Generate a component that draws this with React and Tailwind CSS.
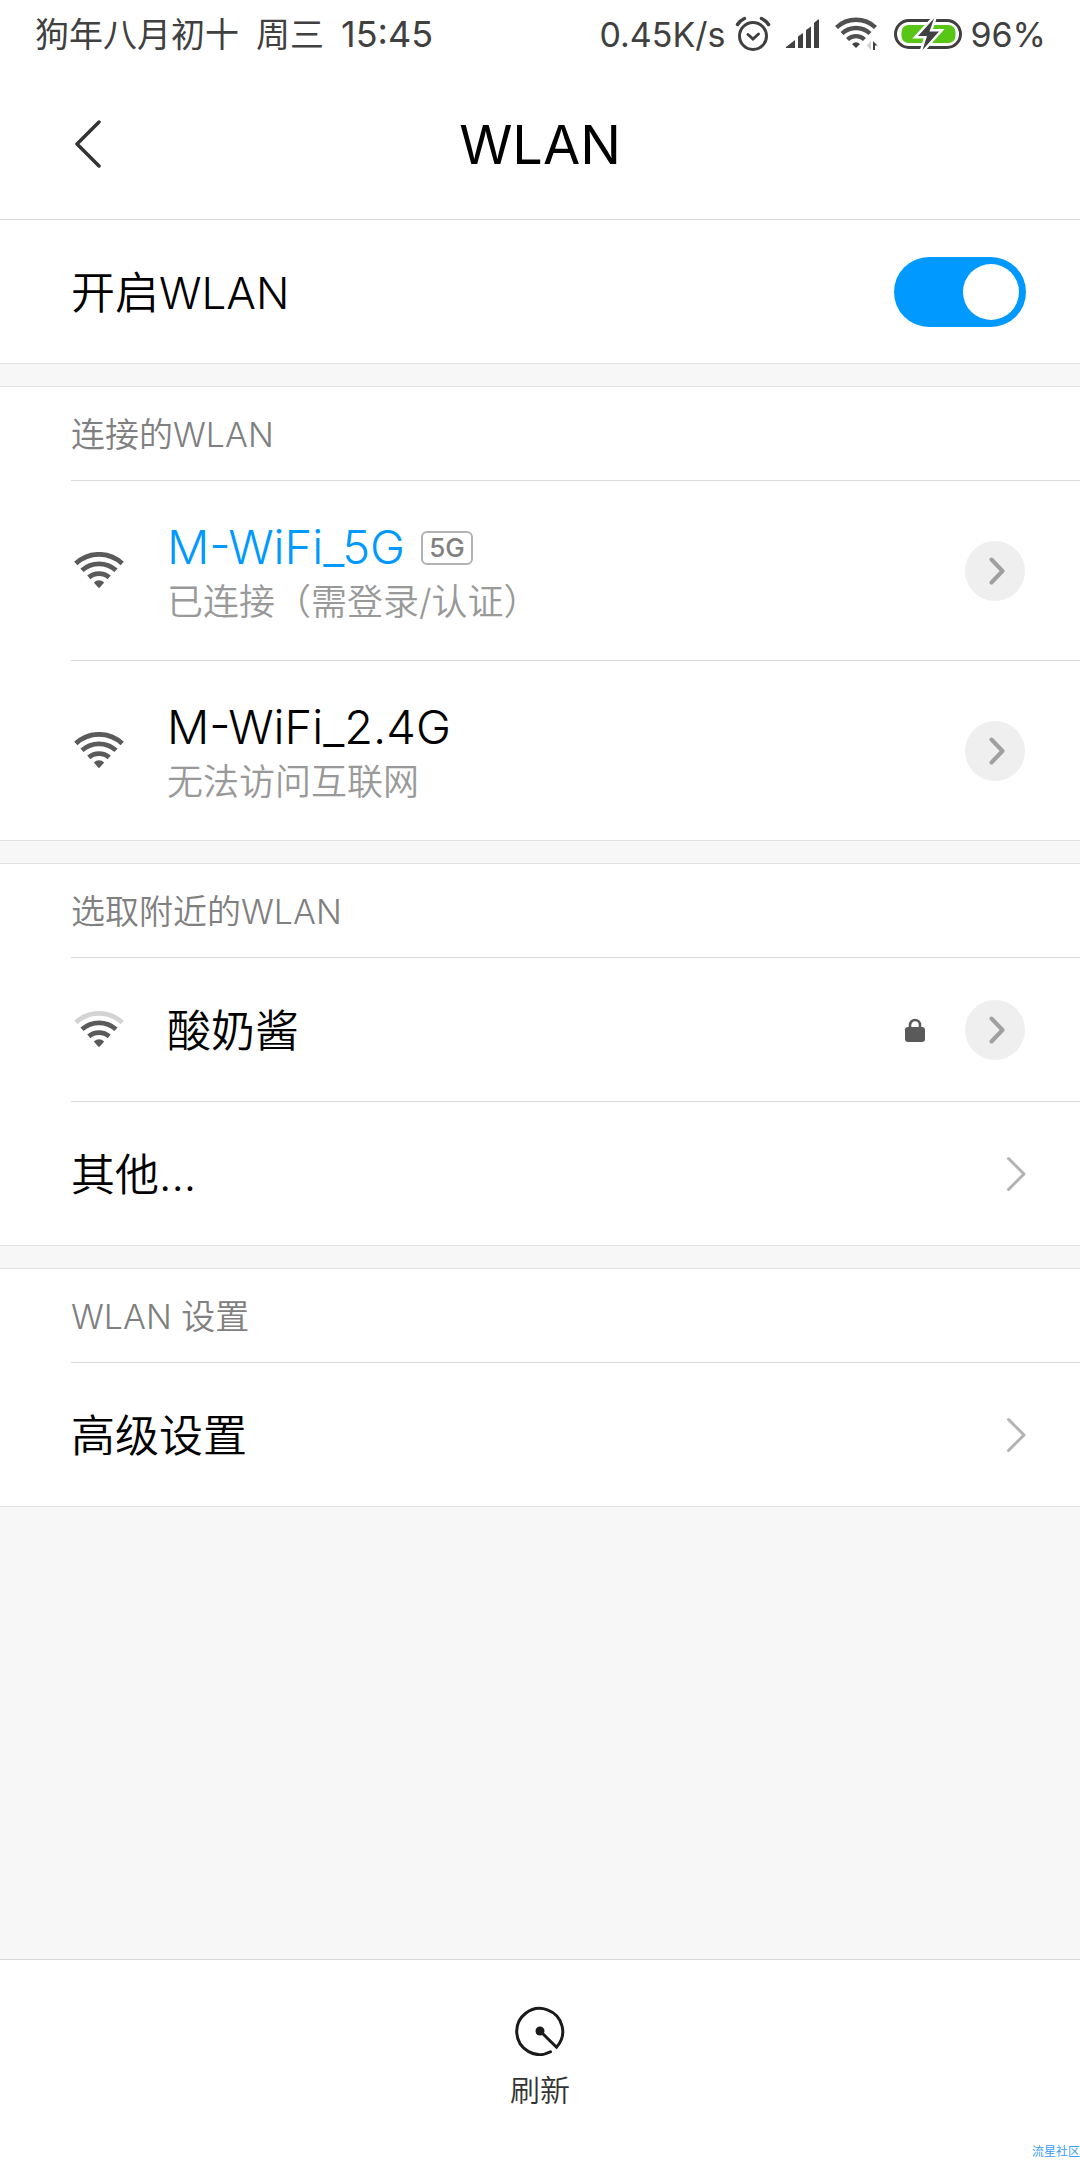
import React, { useState } from 'react';

const WifiIcon = ({ weak = false, className }) => (
  <svg viewBox="0 0 50 37" className={className} fill="none" stroke="currentColor" strokeWidth="4.8" aria-hidden="true">
    <path d="M1.8 11.5a34 34 0 0 1 46.4 0" opacity={weak ? 0.26 : 1} />
    <path d="M8 18.3a25.5 25.5 0 0 1 34 0" />
    <path d="M14.8 25.4a15.5 15.5 0 0 1 20.4 0" />
    <path d="M19.8 30.6q5.2-4.6 10.4 0l-4.4 4.9q-.8.8-1.6 0z" fill="currentColor" stroke="none" />
  </svg>
);

const AlarmIcon = () => (
  <svg viewBox="0 0 36 36" className="w-9 h-9" fill="none" stroke="currentColor" strokeWidth="3" strokeLinecap="round" aria-hidden="true">
    <circle cx="18" cy="20" r="13.5" />
    <path d="M13 18.500l5 4.500 5.500-5" />
    <path d="M2.500 8.500Q5 4.500 9.500 2.500" strokeWidth="3.500" />
    <path d="M33.500 8.500Q31 4.500 26.500 2.500" strokeWidth="3.500" />
  </svg>
);

const SignalIcon = () => (
  <svg viewBox="0 0 34 30" className="w-[34px] h-[30px]" fill="currentColor" aria-hidden="true">
    <path d="M0 29v-1l9-7v8z" />
    <path d="M12 29V17.5l5-3.5v15z" />
    <path d="M20 29V11l5-3.5V29z" />
    <path d="M28 29V4l4-3.500h1V29z" />
  </svg>
);

const StatusWifiIcon = () => (
  <svg viewBox="0 0 43 34" className="w-[43px] h-[34px]" aria-hidden="true">
    <g fill="none" stroke="#505050" strokeWidth="4.4">
      <path d="M1.5 10.5a28.5 28.5 0 0 1 39 0" />
      <path d="M7 16.5a20.5 20.5 0 0 1 28 0" />
      <path d="M12.5 22.5a12.5 12.5 0 0 1 17 0" />
    </g>
    <path d="M17 27q4-3.500 8 0l-4 4z" fill="#404040" />
    <path d="M36 24v9l-4-4.500z" fill="#d0d0d0" />
    <path d="M38 24l4.500 4.500H40V33h-2z" fill="#404040" />
  </svg>
);

const BatteryIcon = () => (
  <svg viewBox="0 0 68 34" className="w-[68px] h-[34px]" aria-hidden="true">
    <rect x="1.500" y="3.500" width="65" height="27" rx="13.500" fill="none" stroke="#404040" strokeWidth="3" />
    <rect x="7.500" y="8" width="54" height="18" rx="7" fill="#57c614" />
    <path d="M40 1.500L24 19h9l-4.500 14L45 14.500h-9.500z" fill="#404040" stroke="#fff" strokeWidth="5" strokeLinejoin="miter" />
    <path d="M40 1.500L24 19h9l-4.500 14L45 14.500h-9.500z" fill="#404040" />
  </svg>
);

const LockIcon = () => (
  <svg viewBox="0 0 20 24" className="w-5 h-6 text-[#5a5a5a]" aria-hidden="true">
    <path d="M5 11V7a5 5 0 0 1 10 0v4" fill="none" stroke="currentColor" strokeWidth="2.600" />
    <rect x="0" y="9" width="20" height="15" rx="3" fill="currentColor" />
  </svg>
);

const Arrow = () => (
  <svg viewBox="0 0 20 36" className="w-5 h-9 shrink-0" fill="none" stroke="#b3b3b3" strokeWidth="3" strokeLinecap="round" strokeLinejoin="round" aria-hidden="true">
    <path d="M2.500 2.500L18 18 2.500 33.500" />
  </svg>
);

const DetailButton = ({ name }) => (
  <button type="button" aria-label={name} className="flex items-center justify-center w-[60px] h-[60px] shrink-0 rounded-full bg-[#efefef]">
    <svg viewBox="0 0 20 28" className="w-5 h-7 ml-1" fill="none" stroke="#a0a0a0" strokeWidth="4" strokeLinecap="round" strokeLinejoin="round" aria-hidden="true">
      <path d="M4.500 2.500L15.500 14l-11 11.500" />
    </svg>
  </button>
);

const Section = ({ title, children }) => (
  <section className="mt-[22px] border-y border-[#e2e2e2] bg-white pl-[71px]">
    <h2 className="flex items-center h-[93px] pt-[2px] text-[34px] font-[350] text-[#808080]">{title}</h2>
    {children}
  </section>
);

const Network = ({ ssid, note, band, connected, weak, locked }) => (
  <div className={`flex items-center border-t border-[#d9d9d9] pr-[55px] ${note ? 'min-h-[180px] text-[47px]' : 'min-h-[144px] text-[44px]'}`}>
    <WifiIcon weak={weak} className="w-[50px] h-[37px] ml-[3px] mr-[43px] shrink-0 text-[#5a5a5a]" />
    <div className="flex-1 min-w-0 pt-[2px]">
      <div className={`flex items-center h-[60px] font-[350] ${connected ? 'text-[#0099ff]' : 'text-black'}`}>
        <span>{ssid}</span>
        {band && (
          <span className="flex items-center justify-center ml-4 w-[52px] h-[34px] rounded-md border-2 border-[#b3b3b3] text-[26px] font-medium text-[#808080]">
            {band}
          </span>
        )}
      </div>
      {note && <p className="text-[36px] leading-[48px] font-[350] text-[#999999]">{note}</p>}
    </div>
    {locked && <div className="mr-10"><LockIcon /></div>}
    <DetailButton name={ssid} />
  </div>
);

const LinkRow = ({ label }) => (
  <a href="#" className="flex items-center justify-between min-h-[144px] border-t border-[#d9d9d9] pr-[54px] text-[44px] font-[350] text-black">
    <span className="pt-[2px]">{label}</span>
    <Arrow />
  </a>
);

export default function App() {
  const [enabled, setEnabled] = useState(true);

  return (
    <div lang="zh-CN" className="relative flex flex-col min-h-screen overflow-hidden bg-[#f7f7f7] font-['Inter','Noto_Sans_CJK_SC',sans-serif]">
      <header className="bg-white border-b border-[#d9d9d9]">
        <div className="flex items-center justify-between h-[68px] pl-[35px] pr-[34px] text-[34px] text-[#404040]">
          <div className="flex items-center gap-[17px]">
            <span>狗年八月初十</span>
            <span>周三</span>
            <span className="text-[36px]">15:45</span>
          </div>
          <div className="flex items-center">
            <span className="mr-[10px]">0.45K/s</span>
            <AlarmIcon />
            <div className="ml-[15px]"><SignalIcon /></div>
            <div className="ml-[15px]"><StatusWifiIcon /></div>
            <div className="ml-4"><BatteryIcon /></div>
            <span className="ml-2">96%</span>
          </div>
        </div>
        <div className="grid grid-cols-[1fr_auto_1fr] items-center h-[151px]">
          <button type="button" aria-label="返回" className="ml-[74px] w-7 h-12">
            <svg viewBox="0 0 28 48" className="w-7 h-12" fill="none" stroke="#333" strokeWidth="3.500" strokeLinecap="round" strokeLinejoin="round" aria-hidden="true">
              <path d="M25 2L3 24l22 22" />
            </svg>
          </button>
          <h1 className="pt-[2px] text-[54px] text-black">WLAN</h1>
        </div>
      </header>

      <main className="flex-1">
        <div className="flex items-center justify-between h-[144px] pl-[71px] pr-[54px] bg-white border-b border-[#e2e2e2]">
          <label htmlFor="wlan" className="pt-[2px] text-[44px] font-[350] text-black">开启WLAN</label>
          <input
            id="wlan"
            type="checkbox"
            role="switch"
            checked={enabled}
            onChange={(e) => setEnabled(e.target.checked)}
            className="appearance-none flex items-center w-[132px] h-[70px] px-[7px] rounded-full bg-[#d9d9d9] checked:bg-[#0099ff] checked:justify-end before:block before:w-14 before:h-14 before:rounded-full before:bg-white"
          />
        </div>

        <Section title="连接的WLAN">
          <Network ssid="M-WiFi_5G" band="5G" note="已连接（需登录/认证）" connected />
          <Network ssid="M-WiFi_2.4G" note="无法访问互联网" />
        </Section>

        <Section title="选取附近的WLAN">
          <Network ssid="酸奶酱" weak locked />
          <LinkRow label="其他..." />
        </Section>

        <Section title="WLAN 设置">
          <LinkRow label="高级设置" />
        </Section>
      </main>

      <footer className="flex justify-center bg-white border-t border-[#d9d9d9] pt-[46px] pb-[50px]">
        <button type="button" className="flex flex-col items-center gap-[14px] text-[30px] leading-10 font-[350] text-[#333]">
          <svg viewBox="0 0 50 50" className="w-[50px] h-[50px]" fill="none" stroke="#1a1a1a" strokeWidth="3" strokeLinecap="round" aria-hidden="true">
            <path d="M35.500 45.800A23 23 0 1 1 41.500 41.200L25 25" />
            <circle cx="25" cy="25" r="4.500" fill="#1a1a1a" stroke="none" />
          </svg>
          刷新
        </button>
      </footer>

      <span className="absolute right-0 bottom-0 text-[12px] leading-4 text-[#3a9df5]">流星社区</span>
    </div>
  );
}
